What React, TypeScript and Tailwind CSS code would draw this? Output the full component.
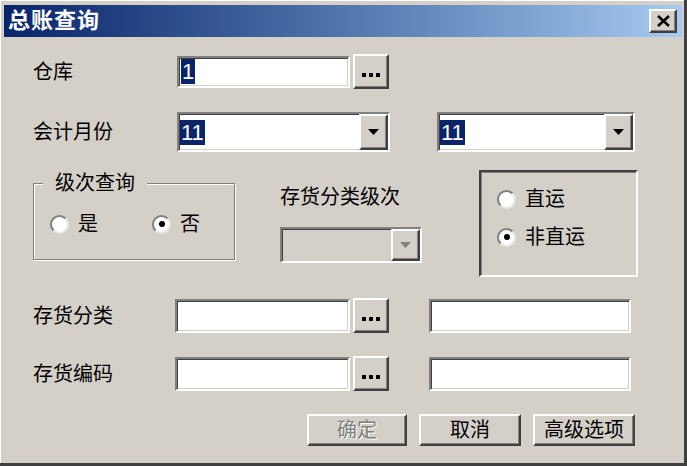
import React from 'react'

const sunken =
  'border-2 border-t-[#808080] border-l-[#808080] border-r-white border-b-white shadow-[inset_1px_1px_0_#404040,inset_-1px_-1px_0_#d4d0c8]'
const raised =
  'border-2 border-t-white border-l-white border-r-[#404040] border-b-[#404040] shadow-[inset_-1px_-1px_0_#808080] bg-[#d4d0c8]'

const Dots = () => (
  <button className={`${raised} w-[36px] h-[35px] flex items-center justify-center gap-[3px] pt-[6px]`}>
    <span className="w-[4px] h-[4px] bg-black" />
    <span className="w-[4px] h-[4px] bg-black" />
    <span className="w-[4px] h-[4px] bg-black" />
  </button>
)

const Arrow = ({ color = '#000' }: { color?: string }) => (
  <svg width="11" height="6" viewBox="0 0 11 6">
    <path d="M0 0h11L5.5 6z" fill={color} />
  </svg>
)

const Combo = ({ w, value, disabled }: { w: string; value?: string; disabled?: boolean }) => (
  <div className={`${sunken} ${w} h-full flex items-stretch ${disabled ? 'bg-[#d4d0c8]' : 'bg-white'}`}>
    <div className="flex-1 flex items-center pl-[1px]">
      {value && (
        <span className="bg-[#0a246a] text-white text-[22px] leading-[25px] px-[1px]">{value}</span>
      )}
    </div>
    <div className={`${raised} w-[29px] flex items-center justify-center`}>
      <Arrow color={disabled ? '#808080' : '#000'} />
    </div>
  </div>
)

const Radio = ({ checked, label }: { checked?: boolean; label: string }) => (
  <div className="flex items-center gap-[9px]">
    <span className="w-[19px] h-[19px] rounded-full bg-white border-2 border-t-[#808080] border-l-[#808080] border-r-[#e8e6e0] border-b-[#e8e6e0] flex items-center justify-center">
      {checked && <span className="w-[6px] h-[6px] rounded-full bg-black" />}
    </span>
    <span>{label}</span>
  </div>
)

const Btn = ({ children, disabled, w }: { children: React.ReactNode; disabled?: boolean; w: string }) => (
  <button
    className={`${raised} ${w} h-[32px] flex items-center justify-center text-[20px] leading-none ${
      disabled ? 'text-[#808080] [text-shadow:1px_1px_0_#fff]' : 'text-black'
    }`}
  >
    {children}
  </button>
)

export default function App() {
  return (
    <div className="w-[687px] h-[466px] bg-[#d4d0c8] overflow-hidden shadow-[inset_-3px_-3px_0_#404040,inset_1px_1px_0_#fff] font-[family-name:'Liberation_Sans','Noto_Sans_CJK_SC',sans-serif] text-[20px] text-black">
      {/* title bar */}
      <div className="ml-[4px] mt-[5px] w-[678px] h-[32px] flex items-center justify-between bg-gradient-to-r from-[#0a246a] to-[#a6caf0] pl-[4px] pr-[5px]">
        <span className="text-white font-bold text-[22px] tracking-[1px] leading-none">总账查询</span>
        <button className={`${raised} w-[28px] h-[24px] flex items-center justify-center`}>
          <svg width="15" height="12" viewBox="0 0 15 12">
            <path d="M2 1l11 10M13 1L2 11" stroke="#000" strokeWidth="2.6" />
          </svg>
        </button>
      </div>

      <div className="pl-[33px] flex flex-col">
        {/* 仓库 */}
        <div className="mt-[17px] h-[35px] flex items-center">
          <span className="w-[144px]">仓库</span>
          <div className={`${sunken} w-[173px] h-[32px] bg-white flex items-center pl-[2px]`}>
            <span className="bg-[#0a246a] text-white text-[22px] leading-[25px] px-[1px]">1</span>
          </div>
          <div className="ml-[3px]">
            <Dots />
          </div>
        </div>

        {/* 会计月份 */}
        <div className="mt-[23px] h-[40px] flex items-center">
          <span className="w-[144px]">会计月份</span>
          <Combo w="w-[213px]" value="11" />
          <div className="ml-[47px] h-full">
            <Combo w="w-[198px]" value="11" />
          </div>
        </div>

        {/* group row */}
        <div className="mt-[18px] h-[107px] flex items-start">
          <fieldset className="mt-[3px] w-[202px] h-[87px] border border-[#808080] shadow-[inset_1px_1px_0_#fff,1px_1px_0_#fff] pl-[16px]">
            <legend className="-ml-[7px] px-[12px] bg-[#d4d0c8] leading-[20px]">级次查询</legend>
            <div className="mt-[16px] flex items-center gap-[54px]">
              <Radio label="是" />
              <Radio checked label="否" />
            </div>
          </fieldset>

          <div className="ml-[45px] flex flex-col">
            <span className="mt-[16px] leading-[22px]">存货分类级次</span>
            <div className="mt-[19px] h-[36px]">
              <Combo w="w-[142px]" disabled />
            </div>
          </div>

          <div className="ml-[57px] w-[159px] h-[107px] border-2 border-t-[#404040] border-l-[#404040] border-r-white border-b-white shadow-[inset_1px_1px_0_#808080] pl-[16px] pt-[12px] flex flex-col gap-[8px]">
            <Radio label="直运" />
            <Radio checked label="非直运" />
          </div>
        </div>

        {/* 存货分类 */}
        <div className="mt-[21px] h-[35px] flex items-center">
          <span className="w-[142px]">存货分类</span>
          <div className={`${sunken} w-[175px] h-[34px] bg-white`} />
          <div className="ml-[3px]">
            <Dots />
          </div>
          <div className={`${sunken} ml-[40px] w-[202px] h-[34px] bg-white`} />
        </div>

        {/* 存货编码 */}
        <div className="mt-[23px] h-[35px] flex items-center">
          <span className="w-[142px]">存货编码</span>
          <div className={`${sunken} w-[175px] h-[34px] bg-white`} />
          <div className="ml-[3px]">
            <Dots />
          </div>
          <div className={`${sunken} ml-[40px] w-[202px] h-[34px] bg-white`} />
        </div>

        {/* buttons */}
        <div className="mt-[23px] ml-[274px] flex items-center gap-[12px]">
          <Btn w="w-[100px]" disabled>
            确定
          </Btn>
          <Btn w="w-[102px]">取消</Btn>
          <Btn w="w-[102px]">高级选项</Btn>
        </div>
      </div>
    </div>
  )
}
